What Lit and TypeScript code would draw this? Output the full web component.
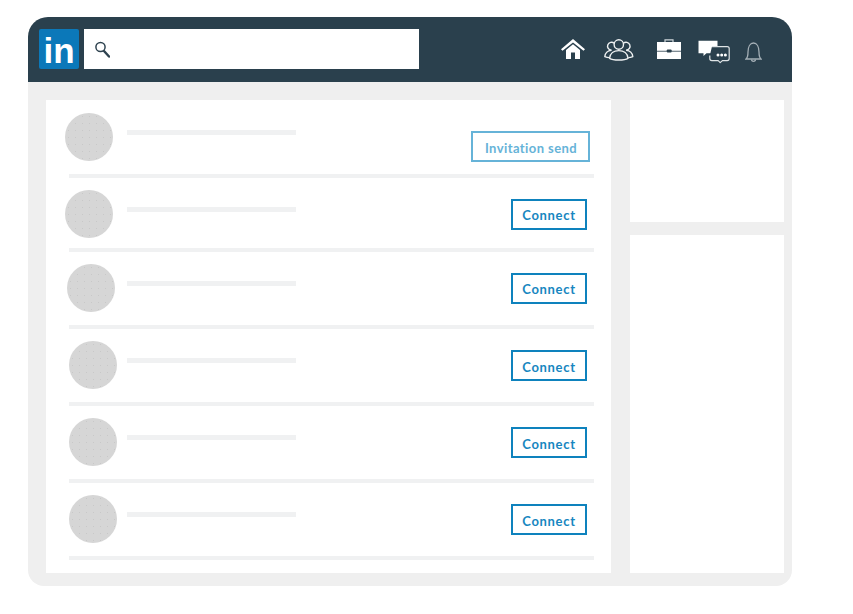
import { LitElement, html, css } from "lit";
import { customElement } from "lit/decorators.js";

interface Row { ax: number; at: number; lt: number; bt: number; h: number; tt: number; invite?: boolean; }

const ROWS: Row[] = [
  { ax: 19, at: 13, lt: 30, bt: 31, h: 74, tt: 2, invite: true },
  { ax: 19, at: 12, lt: 29, bt: 21, h: 70, tt: 0 },
  { ax: 21, at: 12, lt: 29, bt: 21, h: 73, tt: 0 },
  { ax: 23, at: 12, lt: 29, bt: 21, h: 73, tt: 2 },
  { ax: 23, at: 12, lt: 29, bt: 21, h: 73, tt: 2 },
  { ax: 23, at: 12, lt: 29, bt: 21, h: 73, tt: 2 },
];

@customElement("app-root")
export class AppRoot extends LitElement {
  static styles = css`
    :host { display: block; width: 853px; height: 614px; background: #fff; overflow: hidden; font-family: "Lato", "Open Sans", sans-serif; }
    .page { padding: 17px 61px 0 28px; }
    .window { height: 569px; border-radius: 20px 20px 16px 16px; background: #efefef; overflow: hidden; display: flex; flex-direction: column; }
    .top { flex: 0 0 65px; box-sizing: border-box; background: #2a404d; display: flex; align-items: flex-start; padding: 12px 0 0 11px; }
    .logo { box-sizing: border-box; width: 40px; height: 40px; padding-top: 4px; border-radius: 2px; background: #0b78b9; color: #fff; font: 700 35px/36px "Liberation Sans", Arial, sans-serif; text-align: center; }
    .search { width: 335px; height: 40px; margin-left: 5px; background: #fff; display: flex; align-items: center; padding-left: 10px; box-sizing: border-box; }
    .icons { margin-left: auto; display: flex; align-items: flex-start; padding-right: 30px; }
    .icons svg { display: block; }
    .i-home { margin-top: 10px; }
    .i-people { margin: 9px 0 0 19px; }
    .i-case { margin: 10px 0 0 23px; }
    .i-chat { margin: 11px 0 0 17px; }
    .i-bell { margin: 12px 0 0 15px; }
    .body { flex: 1; display: flex; padding: 18px 8px 13px 18px; gap: 19px; min-height: 0; }
    .main { width: 565px; background: #fff; display: flex; flex-direction: column; }
    .row { display: flex; align-items: flex-start; }
    .avatar { width: 48px; height: 48px; border-radius: 50%; background-color: #d6d6d6; background-image: radial-gradient(circle, #c8c8c8 0.6px, transparent 0.9px); background-size: 7px 7px; flex: none; }
    .ph { flex: none; width: 169px; height: 5px; background: #f0f1f2; }
    .btn { flex: none; box-sizing: border-box; height: 31px; width: 76px; border: 2px solid #0e82bd; color: #1786c0; font-size: 13px; font-weight: 700; letter-spacing: 0.7px; display: flex; align-items: center; justify-content: center; background: #fff; }
    .btn.invite { width: 119px; border-color: #66b3d8; color: #66b3d8; letter-spacing: 0.42px; padding-left: 1px; }
    .slot { flex: 1; display: flex; justify-content: flex-end; }
    .rule { height: 4px; background: #f0f1f2; margin: 0 17px 0 23px; flex: none; }
    .side { width: 154px; display: flex; flex-direction: column; gap: 13px; }
    .side div { background: #fff; }
    .s1 { height: 122px; }
    .s2 { flex: 1; }
  `;

  private home() {
    return html`<svg class="i-home" width="24" height="20" viewBox="0 0 24 20"><path fill="#fff" d="M0 10.300 12 0l12 10.300-1.500 1.500L12 3.400 1.500 11.800z"/><path fill="#fff" d="M5 11 12 5.200 19 11v9h-5v-6.400h-4V20H5z"/></svg>`;
  }
  private people() {
    return html`<svg class="i-people" width="30" height="23" viewBox="0 0 30 23" fill="none" stroke="#edf0f1" stroke-width="1.400" stroke-linejoin="round"><circle cx="14.800" cy="6.500" r="4.700"/><path d="M10.200 5.200A4 4 0 1 0 7.400 12.200M19.400 5.200A4 4 0 1 1 22.200 12.200"/><path d="M7.400 12.200C3.800 12.600 1 15.200.8 18.600c1.400.6 3 1 4.600 1M22.200 12.200c3.600.4 6.400 3 6.600 6.400-1.400.6-3 1-4.600 1"/><path d="M5.600 20.300c.4-4.800 4.200-7.700 9.200-7.700s8.800 2.900 9.200 7.700c-2 1.300-5 1.700-9.200 1.700s-7.200-.4-9.200-1.700z"/></svg>`;
  }
  private brief() {
    return html`<svg class="i-case" width="24" height="20" viewBox="0 0 24 20"><path fill="none" stroke="#cfd6da" stroke-width="1.200" d="M8 3.500V.8h8V3.500"/><rect y="3" width="24" height="8.800" fill="#fff"/><rect y="12.600" width="24" height="7.400" fill="#fff"/><rect x="9.800" y="10.400" width="4.800" height="3.200" rx=".8" fill="#2a404d"/></svg>`;
  }
  private chat() {
    return html`<svg class="i-chat" width="32" height="24" viewBox="0 0 32 24"><path fill="#fff" d="M.5.700h19v12.500H8.500l-3 2.800v-2.800H.5z"/><path fill="#2a404d" stroke="#dfe4e6" stroke-width="1.200" stroke-linejoin="round" d="M14 6.600h15.200q2 0 2 2v10q0 2-2 2h-4.800l-2.200 2-2-2h-6.400q-2 0-2-2v-3"/><circle cx="20" cy="15" r="1.500" fill="#fff"/><circle cx="23.700" cy="15" r="1.500" fill="#fff"/><circle cx="27.400" cy="15" r="1.500" fill="#fff"/></svg>`;
  }
  private bell() {
    return html`<svg class="i-bell" width="17" height="22" viewBox="0 0 17 22" fill="none" stroke="#a3aeb5" stroke-width="1.300"><path d="M1 18c1.800-1.500 2-3.800 2-7 0-5.400 2.200-9 5.500-9S14 5.600 14 11c0 3.200.2 5.500 2 7z"/><path d="M6.500 18.500c0 2.400 4 2.400 4 0"/></svg>`;
  }

  render() {
    return html`<div class="page"><div class="window">
      <div class="top">
        <div class="logo">in</div>
        <div class="search"><svg width="16" height="17" viewBox="0 0 16 17" fill="none" stroke="#2f4350"><circle cx="6.500" cy="6" r="4.600" stroke-width="1.500"/><path d="M10 10l5 5.500" stroke-width="2.400" stroke-linecap="round"/></svg></div>
        <div class="icons">${this.home()}${this.people()}${this.brief()}${this.chat()}${this.bell()}</div>
      </div>
      <div class="body">
        <div class="main">
          ${ROWS.map((r) => html`
            <div class="row" style="height:${r.h}px">
              <div class="avatar" style="margin:${r.at}px 0 0 ${r.ax}px"></div>
              <div class="ph" style="margin:${r.lt}px 0 0 ${33 - r.ax}px"></div>
              <div class="slot" style="padding:${r.bt}px ${r.invite ? 21 : 24}px 0 0"><div class="btn ${r.invite ? "invite" : ""}" style="padding-top:${r.tt}px">${r.invite ? "Invitation send" : "Connect"}</div></div>
            </div>
            <div class="rule"></div>`)}
        </div>
        <div class="side"><div class="s1"></div><div class="s2"></div></div>
      </div>
    </div></div>`;
  }
}
